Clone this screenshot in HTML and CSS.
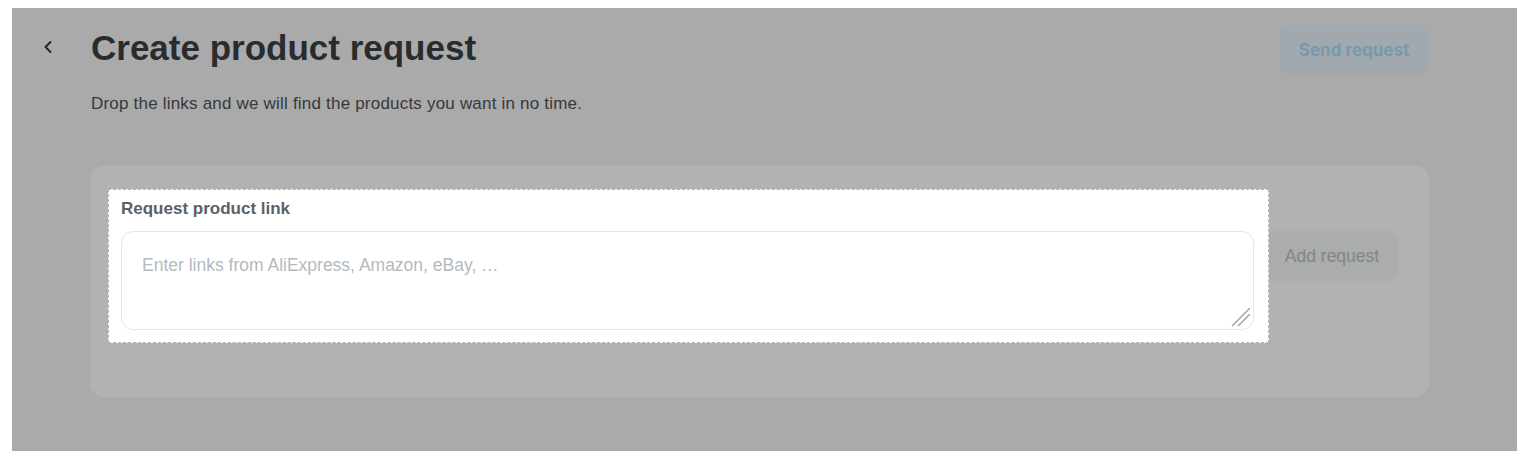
FILE: index.html
```html
<!DOCTYPE html>
<html lang="en">

<head>
    <meta charset="UTF-8">
    <meta name="viewport" content="width=device-width, initial-scale=1.0">
    <title>Create product request</title>
    <link rel="stylesheet" href="styles.css">
</head>

<body>

    <div class="page">

        <!-- Header -->
        <div class="header">
            <div class="header-left">
                <a href="#" class="back">
                    <svg width="8" height="12" viewBox="0 0 8 12">
                        <polyline points="6.5,1 1.5,6 6.5,11" fill="none" stroke="#2d3136" stroke-width="1.8" stroke-linecap="round" stroke-linejoin="round" />
                    </svg>
                </a>
                <h1>Create product request</h1>
            </div>
            <button class="send-btn" disabled>Send request</button>
        </div>

        <p class="subtitle">Drop the links and we will find the products you want in no time.</p>

        <!-- Request Card -->
        <div class="card">
            <div class="request-row">
                <div class="field">
                    <label for="links">Request product link</label>
                    <div class="textarea-wrap">
                        <textarea id="links" placeholder="Enter links from AliExpress, Amazon, eBay, …"></textarea>
                        <!-- resize grip -->
                        <svg class="grip" width="20" height="20" viewBox="0 0 20 20">
                            <line x1="1" y1="19" x2="19" y2="1" stroke="#9ca3a8" stroke-width="1.4" />
                            <line x1="7" y1="19" x2="19" y2="7" stroke="#9ca3a8" stroke-width="1.4" />
                        </svg>
                    </div>
                </div>
                <button class="add-btn">Add request</button>
            </div>
        </div>

        <!-- Tour overlay -->
        <div class="overlay"></div>

    </div>

</body>

</html>
```

FILE: styles.css
```css
/* Global Styles */
body {
    font-family: "Liberation Sans", Arial, sans-serif;
    background-color: white;
    margin: 8px 5px 9px 12px;
}

.page {
    position: relative;
    height: 443px;
    background-color: #f3f4f3;
    padding: 0 88px 0 32px;
    box-sizing: border-box;
    overflow: hidden;
}

/* Header */
.header {
    display: flex;
    align-items: flex-start;
    justify-content: space-between;
    padding-top: 17px;
}

.header-left {
    display: flex;
    align-items: center;
    margin-top: 3px;
}

.back {
    display: flex;
    width: 12px;
    margin-right: 35px;
    margin-bottom: 3px;
}

h1 {
    margin: 0;
    font-size: 35px;
    line-height: 40px;
    font-weight: bold;
    color: #3a3f44;
}

.send-btn {
    width: 150px;
    height: 50px;
    border: none;
    border-radius: 10px;
    background-color: #e8f3f9;
    color: #a9dcfb;
    font-family: Inter, sans-serif;
    font-size: 17px;
    font-weight: 700;
}

.subtitle {
    margin: 19px 0 0 47px;
    font-size: 17px;
    letter-spacing: 0.2px;
    color: #4f5356;
}

/* Card */
.card {
    margin: 52px 0 0 46px;
    background-color: white;
    border-radius: 14px;
    padding: 33px 30px 67px 31px;
}

.request-row {
    display: flex;
    gap: 11px;
}

.field {
    flex: 1;
    display: flex;
    flex-direction: column;
    position: relative;
    z-index: 20;
}

/* spotlight box around the highlighted field */
.field::before {
    content: "";
    position: absolute;
    top: -10px;
    left: -13px;
    right: -15px;
    bottom: -13px;
    background-color: white;
    border: 1px dashed #b4b4b4;
    z-index: -1;
}

.field label {
    font-size: 17px;
    line-height: 20px;
    font-weight: bold;
    color: #5b6166;
    margin-bottom: 12px;
}

.textarea-wrap {
    position: relative;
    display: flex;
}

.textarea-wrap textarea {
    flex: 1;
    height: 99px;
    box-sizing: border-box;
    border: 1px solid #e4e7e9;
    border-radius: 12px;
    padding: 23px 20px 19px;
    font-family: "Liberation Sans", Arial, sans-serif;
    font-size: 17.5px;
    line-height: 20px;
    outline: none;
    resize: none;
}

.textarea-wrap textarea::placeholder {
    color: #b3babf;
}

.grip {
    position: absolute;
    right: 3px;
    bottom: 3px;
}

.add-btn {
    margin-top: 32px;
    width: 134px;
    height: 50px;
    border: none;
    border-radius: 10px;
    background-color: #f5f6f6;
    color: #bac1c8;
    font-family: "Liberation Sans", Arial, sans-serif;
    font-size: 17.5px;
}

/* Overlay */
.overlay {
    position: absolute;
    top: 0;
    left: 0;
    right: 0;
    bottom: 0;
    background-color: rgba(0, 0, 0, 0.3);
    z-index: 10;
}
```
